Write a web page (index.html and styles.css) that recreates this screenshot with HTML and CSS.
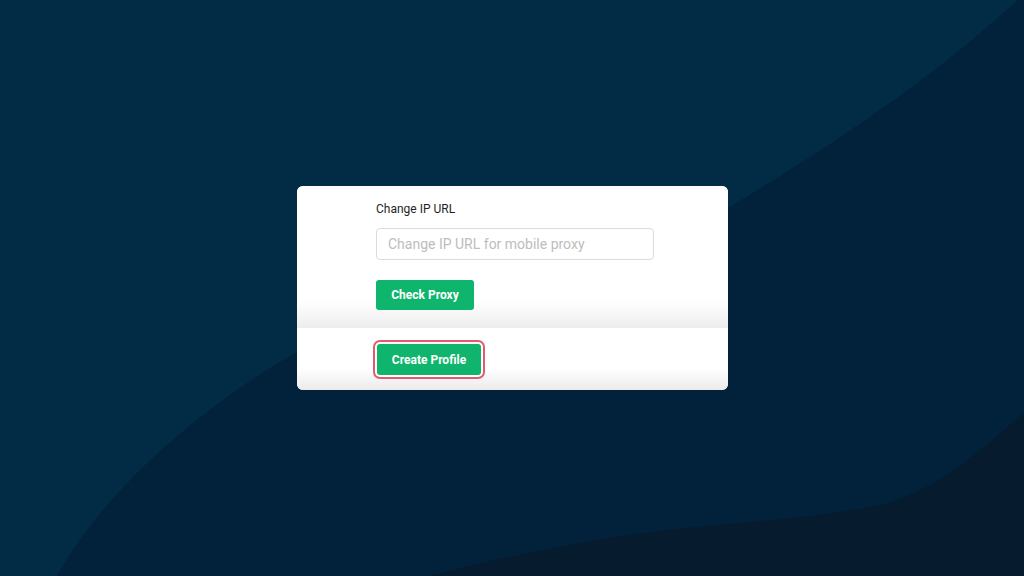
FILE: index.html
```html
<!DOCTYPE html>
<html lang="en">
<head>
<meta charset="utf-8">
<title>Create Profile</title>
<link rel="stylesheet" href="styles.css">
</head>
<body>
<svg class="backdrop" viewBox="0 0 1024 576" preserveAspectRatio="none" aria-hidden="true">
  <rect width="1024" height="576" fill="#022b45"/>
  <path d="M1018 0 C 930 80, 840 140, 730 207 C 620 270, 400 290, 297 352 C 220 395, 110 480, 57 576 L 1024 576 L 1024 0 Z" fill="#01223a"/>
  <path d="M1024 413 C 980 450, 940 490, 880 505 C 820 518, 740 522, 650 532 C 560 545, 490 560, 430 576 L 1024 576 Z" fill="#061b2d"/>
</svg>
<main class="card">
  <section class="card-body">
    <label class="field-label" for="change-ip">Change IP URL</label>
    <input id="change-ip" class="field-input" type="text" placeholder="Change IP URL for mobile proxy">
    <button class="btn btn-green">Check Proxy</button>
  </section>
  <footer class="card-footer">
    <button class="btn btn-green btn-focus">Create Profile</button>
  </footer>
</main>
</body>
</html>
```
FILE: styles.css
```css
html, body {
  margin: 0;
  height: 100%;
}
body {
  display: flex;
  align-items: center;
  justify-content: center;
  background: #022b45;
  font-family: Roboto, "Liberation Sans", sans-serif;
  overflow: hidden;
}
.backdrop {
  position: fixed;
  inset: 0;
  width: 100%;
  height: 100%;
  z-index: 0;
}
.card {
  position: relative;
  z-index: 1;
  width: 431px;
  height: 204px;
  background: #fff;
  border-radius: 6px;
  overflow: hidden;
  display: flex;
  flex-direction: column;
  margin-left: 1px;
}
.card-body {
  height: 142px;
  box-sizing: border-box;
  padding: 15px 0 0 79px;
  display: flex;
  flex-direction: column;
  align-items: flex-start;
  background: linear-gradient(to bottom, #fff 0, #fff 114px, #f4f4f4 132px, #ececec 142px);
}
.field-label {
  font-size: 12px;
  line-height: 16px;
  color: #1f1f1f;
}
.field-input {
  margin-top: 11px;
  width: 278px;
  height: 32px;
  box-sizing: border-box;
  border: 1px solid #dcdcdc;
  border-radius: 4px;
  padding: 0 11px;
  font-family: Roboto, "Liberation Sans", sans-serif;
  font-size: 14px;
  color: #333;
  outline: none;
}
.field-input::placeholder {
  color: #bdbdbd;
}
.btn {
  border: 0;
  font-family: Roboto, "Liberation Sans", sans-serif;
  font-weight: 700;
  font-size: 12px;
  color: #fff;
  padding: 0;
  cursor: pointer;
}
.btn-green {
  background: #0fb56c;
  border-radius: 3px;
}
.card-body .btn {
  margin-top: 20px;
  width: 98px;
  height: 30px;
}
.card-footer {
  flex: 1;
  box-sizing: border-box;
  padding: 16px 0 0 80px;
  background: linear-gradient(to bottom, #fff 0, #fff 40px, #f4f4f4 52px, #ebebeb 62px);
}
.btn-focus {
  width: 104px;
  height: 31px;
  box-shadow: 0 0 0 2px #fff, 0 0 0 4px #e35a6c;
  border-radius: 3px;
}
```
